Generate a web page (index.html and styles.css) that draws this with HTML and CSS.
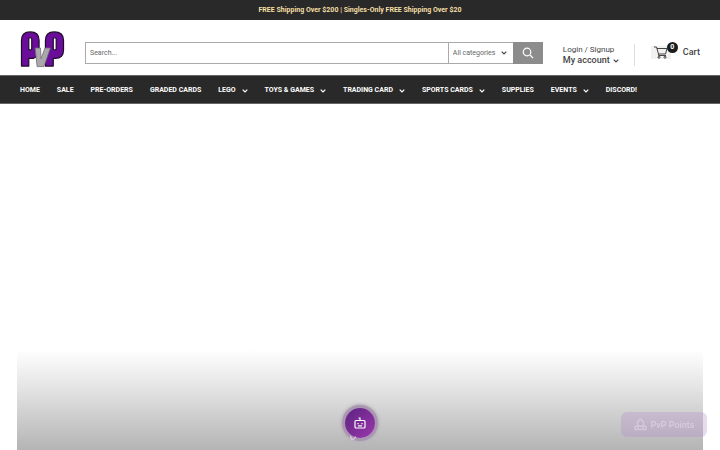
FILE: index.html
```html
<!DOCTYPE html>
<html lang="en">
<head>
<meta charset="utf-8">
<meta name="viewport" content="width=device-width, initial-scale=1">
<title>PvP</title>
<link rel="stylesheet" href="styles.css">
</head>
<body>
<p class="announcement">FREE Shipping Over $200 | Singles-Only FREE Shipping Over $20</p>
<header class="header">
  <a class="logo" href="#" aria-label="PvP home">
    <svg viewBox="0 0 46 38" width="45" height="38">
      <g fill="#6a0d9b" stroke="#1d0b28" stroke-width="1.2" stroke-linejoin="round">
        <path fill-rule="evenodd" d="M1.500 36.500V10Q1.500 1.500 10.500 1.500Q19.500 1.500 19.500 10V20Q19.500 26.500 14 28.500H9V36.500ZM9 9V18.500Q9 20 10.500 20Q12 20 12 18.500V9Q12 7.500 10.500 7.500Q9 7.500 9 9Z"/>
        <path fill-rule="evenodd" d="M26 36.500V10Q26 1.500 35 1.500Q44.500 1.500 44.500 10V20Q44.500 28.500 36 28.500H34V36.500ZM34 9V18.500Q34 20 35.500 20Q37 20 37 18.500V9Q37 7.500 35.500 7.500Q34 7.500 34 9Z"/>
      </g>
      <path d="M15.500 18H21L21.500 29L25.500 18H31L24.500 37H17.500Z" fill="#aaa8ad" stroke="#6f6a73" stroke-width=".8"/>
    </svg>
  </a>
  <form class="search">
    <input class="search-input" type="search" placeholder="Search..." aria-label="Search">
    <div class="category">
      <select class="category-select" aria-label="Category"><option>All categories</option></select>
      <svg class="chevron" viewBox="0 0 6 4"><path d="M.7.7 3 3 5.300.7"/></svg>
    </div>
    <button class="search-button" type="submit" aria-label="Search">
      <svg viewBox="0 0 12 12" width="12" height="12"><circle cx="5" cy="5" r="3.800"/><path d="m8 8 3 3"/></svg>
    </button>
  </form>
  <a class="account" href="#">
    <span>Login / Signup</span>
    <span class="account-name">My account <svg class="chevron" viewBox="0 0 6 4"><path d="M.7.7 3 3 5.300.7"/></svg></span>
  </a>
  <a class="cart" href="#">
    <span class="cart-icon">
      <svg viewBox="0 0 14 13" width="14" height="13"><path d="M0 1h2.500l2 7h7l1.500-5.500H3M4.500 8v1.500H12"/><circle cx="5" cy="11.300" r="1"/><circle cx="11" cy="11.300" r="1"/></svg>
      <span class="cart-count">0</span>
    </span>
    <span>Cart</span>
  </a>
</header>
<nav class="nav">
  <a href="#">HOME</a>
  <a href="#">SALE</a>
  <a href="#">PRE-ORDERS</a>
  <a href="#">GRADED CARDS</a>
  <a href="#">LEGO <svg class="chevron" viewBox="0 0 6 4"><path d="M.7.7 3 3 5.300.7"/></svg></a>
  <a href="#">TOYS &amp; GAMES <svg class="chevron" viewBox="0 0 6 4"><path d="M.7.7 3 3 5.300.7"/></svg></a>
  <a href="#">TRADING CARD <svg class="chevron" viewBox="0 0 6 4"><path d="M.7.7 3 3 5.300.7"/></svg></a>
  <a href="#">SPORTS CARDS <svg class="chevron" viewBox="0 0 6 4"><path d="M.7.7 3 3 5.300.7"/></svg></a>
  <a href="#">SUPPLIES</a>
  <a href="#">EVENTS <svg class="chevron" viewBox="0 0 6 4"><path d="M.7.7 3 3 5.300.7"/></svg></a>
  <a href="#">DISCORD!</a>
</nav>
<main class="hero"></main>
<button class="chat" type="button" aria-label="Open chat">
  <svg viewBox="0 0 12 12" width="12" height="12"><rect x="1" y="3.500" width="10" height="7.500" rx="1"/><path d="M6 3.500V1H4.500M4 6v1.200M8 6v1.200M4 8.800h4"/></svg>
  <svg class="chat-tail" viewBox="0 0 6 5" width="6" height="5"><path d="M.5 1Q1 4.500 3 4.300T5.500 1.500"/></svg>
</button>
<button class="points" type="button">
  <svg viewBox="0 0 13 13" width="13" height="13"><path d="M3.500 7V4L6.500 1l3 3v3l-3 1.500Z"/><circle cx="2.500" cy="10" r="1.800"/><circle cx="10.500" cy="10" r="1.800"/><path d="M5 11.500h3"/></svg>
  <span>PvP Points</span>
</button>
</body>
</html>
```
FILE: styles.css
```css
* {
  box-sizing: border-box;
}

body {
  margin: 0;
  min-height: 100vh;
  display: flex;
  flex-direction: column;
  background: #fff;
  color: #444;
  font: 8px/12px Roboto, sans-serif;
}

a {
  color: inherit;
  text-decoration: none;
}

svg {
  flex: none;
}

.announcement {
  margin: 0;
  padding: 4px 20px;
  background: #292929;
  color: #f5dfa4;
  font-size: 7px;
  font-weight: 700;
  text-align: center;
}

.header {
  display: flex;
  align-items: center;
  padding: 9px 20px 4px;
}

.logo {
  display: flex;
  margin-right: 20px;
  padding: 1px 0 3px;
}

.search {
  display: flex;
  flex: 1;
  height: 22px;
  margin: 5px 20px 0 0;
}

.search-input {
  flex: 1;
  min-width: 0;
  padding: 0 4px;
  border: 1px solid #aaa;
  border-right: 0;
  border-radius: 0;
  background: #fff;
  color: #666;
  font: 7px Roboto, sans-serif;
  appearance: none;
}

.search-input::placeholder {
  color: #666;
}

.category {
  display: flex;
  align-items: center;
  width: 65px;
  padding: 0 6px 0 4px;
  border: 1px solid #aaa;
  border-right: 0;
}

.category-select {
  flex: 1;
  min-width: 0;
  padding: 0;
  border: 0;
  background: none;
  color: #666;
  font: 7px Roboto, sans-serif;
  appearance: none;
}

.chevron {
  width: 6px;
  height: 4px;
  fill: none;
  stroke: currentColor;
  stroke-width: 1.2;
}

.search-button {
  display: flex;
  align-items: center;
  justify-content: center;
  width: 30px;
  padding: 0;
  border: 0;
  background: #8c8c8c;
}

.search-button svg {
  fill: none;
  stroke: #fff;
  stroke-width: 1.2;
}

.account {
  display: flex;
  flex-direction: column;
  width: 72px;
  margin-top: 10px;
  border-right: 1px solid #ddd;
  line-height: 11px;
  white-space: nowrap;
}

.account-name {
  display: flex;
  align-items: center;
  gap: 3px;
  font-size: 9px;
  font-weight: 500;
}

.cart {
  display: flex;
  align-items: center;
  gap: 12px;
  margin: 4px 0 0 16px;
  font-size: 9px;
  font-weight: 500;
}

.cart-icon {
  position: relative;
  display: flex;
  width: 20px;
  height: 13px;
  padding-left: 3px;
  background: #f1f1f1;
}

.cart-icon svg {
  fill: none;
  stroke: #444;
}

.cart-count {
  position: absolute;
  top: -4px;
  right: -7px;
  width: 11px;
  border-radius: 50%;
  background: #1c1c1c;
  color: #fff;
  font-size: 7px;
  font-weight: 700;
  line-height: 11px;
  text-align: center;
}

.nav {
  display: flex;
  gap: 17px;
  padding: 9px 20px 7px;
  border-top: 1px solid #666;
  border-bottom: 1px solid #666;
  background: #292929;
  color: #fff;
  font-size: 7px;
  font-weight: 700;
  line-height: 11px;
  white-space: nowrap;
}

.nav a {
  display: flex;
  align-items: center;
  gap: 6px;
}

.hero {
  flex: 1;
  margin: 0 17px;
  background: linear-gradient(#fff 71%, #e4e4e4 82%, #b4b4b4);
}

.chat {
  position: fixed;
  bottom: 12px;
  left: 50%;
  display: flex;
  align-items: center;
  justify-content: center;
  width: 30px;
  height: 30px;
  margin-left: -15px;
  padding: 0;
  border: 0;
  border-radius: 50%;
  background: linear-gradient(135deg, #5c2380, #9c37ae);
  box-shadow: 0 0 0 3px #a996b0, 0 0 3px 4px #b9adbd;
}

.chat svg,
.points svg {
  fill: none;
  stroke: currentColor;
  stroke-width: 1.2;
}

.chat svg {
  color: #fff;
}

.chat .chat-tail {
  position: absolute;
  bottom: -2px;
  left: 5px;
  color: #ddd2e2;
}

.points {
  position: fixed;
  right: 13px;
  bottom: 13px;
  display: flex;
  align-items: center;
  justify-content: center;
  gap: 4px;
  width: 86px;
  height: 25px;
  padding: 0;
  border: 0;
  border-radius: 6px;
  background: rgba(180, 135, 205, 0.3);
  color: #d6cddd;
  font: 500 9px Roboto, sans-serif;
}
```
